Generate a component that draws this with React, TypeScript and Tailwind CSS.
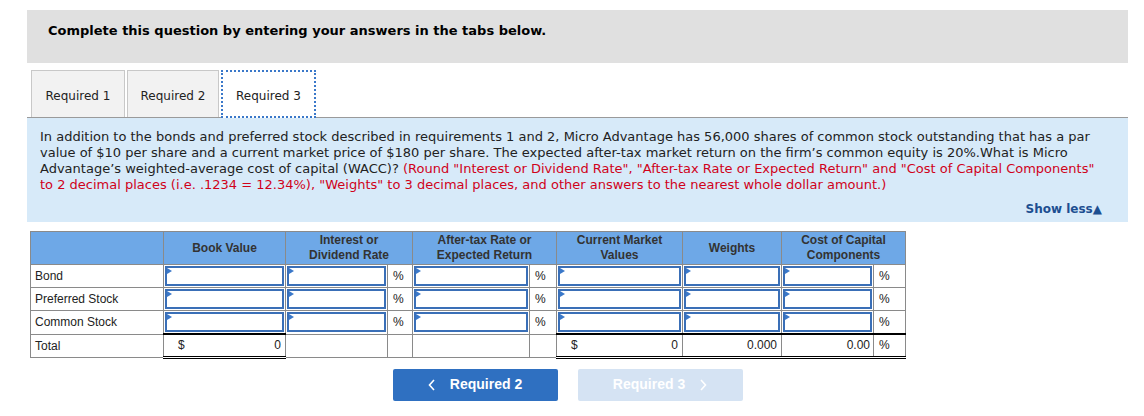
import React from "react";

// ────────────────────────────────────────────
// Data
// ────────────────────────────────────────────

const rows = ["Bond", "Preferred Stock", "Common Stock"];

function InputCell() {
  return (
    <td className="border border-[#8a8a8a] p-px h-[23px]">
      <div className="relative h-[20px] bg-white border-2 border-[#3a6fb7]">
        <span className="absolute left-0 top-0 w-0 h-0 border-y-[3px] border-y-transparent border-l-[5px] border-l-[#3a78c9]" />
      </div>
    </td>
  );
}

function PctCell() {
  return (
    <td className="border border-[#8a8a8a] pl-[5px] text-[12px] text-[#222] align-middle">%</td>
  );
}

const totalCell =
  "border border-[#8a8a8a] border-t-2 border-t-black border-b-[3px] border-b-black border-double";

export default function App() {
  return (
    <div className="w-[1144px] h-[416px] bg-white pl-[27px] pt-[10px] font-['Liberation_Sans',Arial,sans-serif]">
      {/* Header */}
      <div className="w-[1101px] h-[53px] bg-[#e0e0e0] pt-[13px] pl-[21px] font-['DejaVu_Sans',Verdana,sans-serif] text-[13px] leading-[16px] font-bold text-black">
        Complete this question by entering your answers in the tabs below.
      </div>

      {/* Tabs */}
      <div className="w-[1101px] mt-[7px] flex items-end gap-[2px] pl-[4px] border-b border-[#9a9a9a] font-['DejaVu_Sans',Verdana,sans-serif] text-[12px] text-[#222]">
        <div className="w-[94px] h-[47px] pt-[3px] flex items-center justify-center bg-[#f2f2f2] border border-b-0 border-[#c8c8c8]">
          Required 1
        </div>
        <div className="w-[92px] h-[47px] pt-[3px] flex items-center justify-center bg-[#f2f2f2] border border-b-0 border-[#c8c8c8]">
          Required 2
        </div>
        <div className="w-[95px] h-[48px] pt-[3px] -mb-px flex items-center justify-center bg-white border-2 border-dotted border-[#3a78c9]">
          Required 3
        </div>
      </div>

      {/* Question panel */}
      <div className="w-[1101px] bg-[#d7eaf9] pt-[11px] pb-[5px] pl-[13px] pr-[22px] font-['DejaVu_Sans',Verdana,sans-serif] text-[13px] leading-[16px] text-[#222]">
        <p>
          In addition to the bonds and preferred stock described in requirements 1 and 2, Micro Advantage has 56,000 shares of common stock outstanding that has a par value of $10 per share and a current market price of $180 per share. The expected after-tax market return on the firm’s common equity is 20%.What is Micro Advantage’s weighted-average cost of capital (WACC)?{" "}
          <span className="text-[#d0021b]">
            (Round "Interest or Dividend Rate", "After-tax Rate or Expected Return" and "Cost of Capital Components" to 2 decimal places (i.e. .1234 = 12.34%), "Weights" to 3 decimal places, and other answers to the nearest whole dollar amount.)
          </span>
        </p>
        <div className="mt-[8px] pr-[4px] flex justify-end text-[12px] font-bold text-[#1d4f91]">
          Show less▲
        </div>
      </div>

      {/* Table */}
      <table className="mt-[9px] ml-[3px] border-collapse table-fixed text-[12px] text-[#222]">
        <colgroup>
          <col className="w-[133px]" />
          <col className="w-[122px]" />
          <col className="w-[102px]" />
          <col className="w-[25px]" />
          <col className="w-[117px]" />
          <col className="w-[27px]" />
          <col className="w-[126px]" />
          <col className="w-[99px]" />
          <col className="w-[92px]" />
          <col className="w-[32px]" />
        </colgroup>
        <thead>
          <tr className="h-[33px] bg-[#6ea8e7] text-[#333] font-bold leading-[15px]">
            <th className="border border-[#8a8a8a]" />
            <th className="border border-[#8a8a8a] font-bold">Book Value</th>
            <th colSpan={2} className="border border-[#8a8a8a] font-bold">
              Interest or
              <br />
              Dividend Rate
            </th>
            <th colSpan={2} className="border border-[#8a8a8a] font-bold">
              After-tax Rate or
              <br />
              Expected Return
            </th>
            <th className="border border-[#8a8a8a] font-bold">
              Current Market
              <br />
              Values
            </th>
            <th className="border border-[#8a8a8a] font-bold">Weights</th>
            <th colSpan={2} className="border border-[#8a8a8a] font-bold">
              Cost of Capital
              <br />
              Components
            </th>
          </tr>
        </thead>
        <tbody>
          {rows.map((r) => (
            <tr key={r}>
              <td className="border border-[#8a8a8a] pl-[4px] h-[23px]">{r}</td>
              <InputCell />
              <InputCell />
              <PctCell />
              <InputCell />
              <PctCell />
              <InputCell />
              <InputCell />
              <InputCell />
              <PctCell />
            </tr>
          ))}
          <tr className="h-[23px]">
            <td className="border border-[#8a8a8a] pl-[4px]">Total</td>
            <td className={`${totalCell} px-[4px]`}>
              <div className="flex justify-between pl-[10px]">
                <span>$</span>
                <span>0</span>
              </div>
            </td>
            <td className="border border-[#8a8a8a]" />
            <td className="border border-[#8a8a8a]" />
            <td className="border border-[#8a8a8a]" />
            <td className="border border-[#8a8a8a]" />
            <td className={`${totalCell} px-[4px]`}>
              <div className="flex justify-between pl-[10px]">
                <span>$</span>
                <span>0</span>
              </div>
            </td>
            <td className={`${totalCell} px-[4px] text-right`}>0.000</td>
            <td className={`${totalCell} px-[3px] text-right`}>0.00</td>
            <td className={`${totalCell} pl-[5px]`}>%</td>
          </tr>
        </tbody>
      </table>

      {/* Nav buttons */}
      <div className="w-[1101px] mt-[10px] flex justify-center gap-[20px] pr-[20px] text-[14px] font-bold text-white">
        <button className="w-[165px] h-[32px] rounded-[2px] bg-[#2f70c1] flex items-center justify-center gap-[14px]">
          <svg width="8" height="12" viewBox="0 0 8 12" fill="none">
            <path d="M6 1L1.5 6L6 11" stroke="white" strokeWidth="1.6" />
          </svg>
          Required 2
        </button>
        <button className="w-[165px] h-[32px] rounded-[2px] bg-[#d5e3f3] flex items-center justify-center gap-[14px]">
          Required 3
          <svg width="8" height="12" viewBox="0 0 8 12" fill="none">
            <path d="M2 1L6.5 6L2 11" stroke="white" strokeWidth="1.6" />
          </svg>
        </button>
      </div>
    </div>
  );
}
